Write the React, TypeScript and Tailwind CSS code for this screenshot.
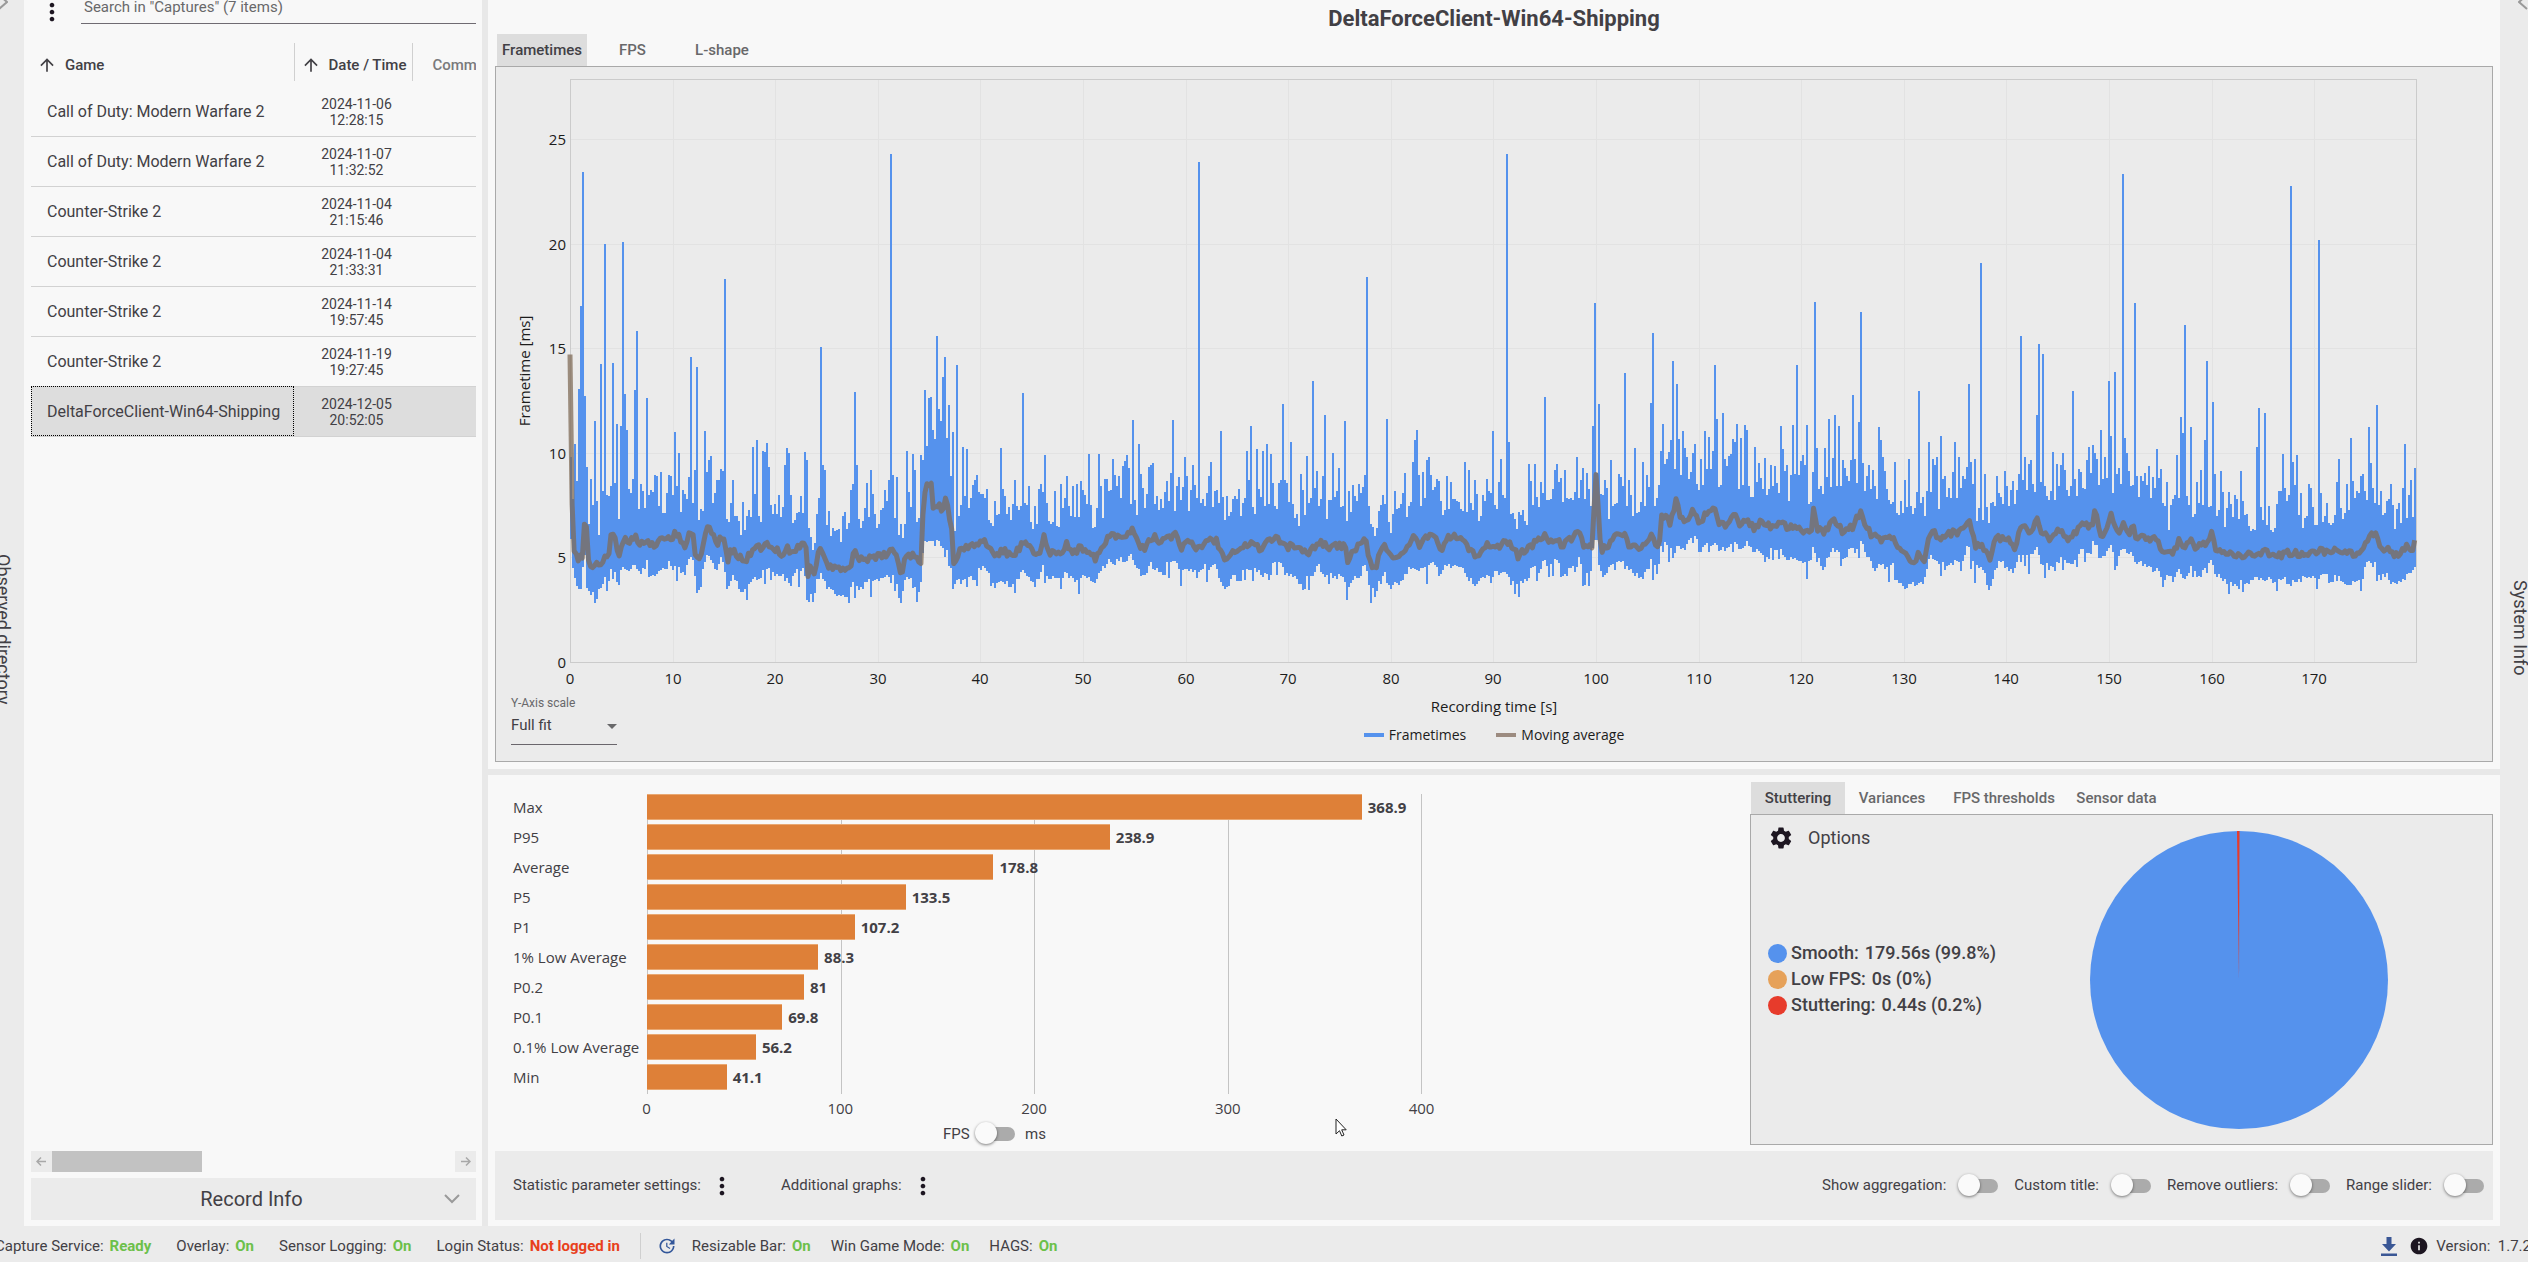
import React from "react";
import {
  MdArrowUpward,
  MdInfo,
  MdMoreVert,
  MdSettings,
  MdUpdate,
} from "react-icons/md";

const captures = [
  { game: "Call of Duty: Modern Warfare 2", date: "2024-11-06", time: "12:28:15" },
  { game: "Call of Duty: Modern Warfare 2", date: "2024-11-07", time: "11:32:52" },
  { game: "Counter-Strike 2", date: "2024-11-04", time: "21:15:46" },
  { game: "Counter-Strike 2", date: "2024-11-04", time: "21:33:31" },
  { game: "Counter-Strike 2", date: "2024-11-14", time: "19:57:45" },
  { game: "Counter-Strike 2", date: "2024-11-19", time: "19:27:45" },
  { game: "DeltaForceClient-Win64-Shipping", date: "2024-12-05", time: "20:52:05" },
];

const metrics = [
  { label: "Max", value: 368.9 },
  { label: "P95", value: 238.9 },
  { label: "Average", value: 178.8 },
  { label: "P5", value: 133.5 },
  { label: "P1", value: 107.2 },
  { label: "1% Low Average", value: 88.3 },
  { label: "P0.2", value: 81 },
  { label: "P0.1", value: 69.8 },
  { label: "0.1% Low Average", value: 56.2 },
  { label: "Min", value: 41.1 },
];

// [seconds, milliseconds] of the single slow frames
const spikes: number[][] = [
  [0, 9.3], [0.4, 10.4], [0.7, 13.05], [1, 17], [1.2, 23.4], [1.35, 12.7], [1.5, 9.3], [2, 8.75], [2.4, 11.5], [2.95, 14.25],
  [3.25, 9.8], [3.4, 20], [4, 14.3], [4.4, 11.4], [4.9, 11.3], [5.1, 20.1], [5.3, 12.8], [5.5, 11.1],
  [6.3, 13], [6.5, 15.8], [7.45, 12.6], [8.3, 8.9], [8.7, 9.1], [9.5, 8.95], [10.2, 11], [10.55, 10],
  [11.6, 14.6], [12, 9.2], [12.25, 14.1], [13, 11.05], [13.2, 9.1], [14.75, 9.15], [14.95, 18.3], [15.7, 8.7],
  [17.7, 10.3], [18.05, 10.6], [18.65, 10.1], [18.85, 10.05], [19.05, 10.45], [19.25, 9.3], [20.8, 9.4],
  [21.1, 10.25], [21.3, 10], [22.75, 10.05], [22.95, 9.65], [24.3, 15.05], [24.5, 9.4], [24.7, 9.2],
  [27.6, 12.9], [27.8, 9.4], [29.3, 9.2], [30.9, 8.7], [31.2, 24.3], [31.4, 8.95], [31.7, 8.85], [32.7, 10.1],
  [33.4, 9.95], [33.6, 9.2], [34.2, 9.9], [34.45, 13], [34.6, 10.7], [34.85, 12.6], [35.1, 12.65], [35.3, 11.1],
  [35.5, 10.5], [35.7, 15.6], [36, 11.5], [36.2, 13.6], [36.4, 14.6], [36.6, 10.7], [36.9, 12.3], [37.15, 11],
  [37.55, 14.2], [38.25, 10.3], [38.6, 10.2], [39.4, 8.7], [42, 10.25], [44.05, 12.85], [46.2, 9.9], [48.4, 8.9],
  [49.4, 8.5], [50.5, 9.95], [51.55, 9.95], [52.85, 9.7], [54.2, 9.9], [54.8, 11.55], [55.4, 10.4], [56.7, 9.5],
  [58.75, 11.55], [59.8, 9.8], [60.6, 9.4], [61.2, 23.9], [62.2, 8.9], [63.3, 11.05], [65.8, 10.1], [66.35, 11.3],
  [66.85, 10.2], [67.35, 10.1], [67.9, 10.4], [68.3, 9.95], [69.4, 12.35], [70.1, 10.5], [71.15, 9], [71.75, 9.85],
  [72.35, 13.45], [72.75, 9.15], [73.4, 11.8], [74.25, 10], [74.85, 9.25], [75.4, 11.5], [76.9, 8.5], [77.65, 18.4],
  [79.55, 11.6], [81.2, 9.05], [82.3, 10.6], [82.5, 11.1], [83.35, 9.65], [83.55, 9.8], [83.9, 8.95], [85.45, 8.9],
  [87.05, 9.55], [87.6, 9.2], [88.2, 8.7], [89.95, 11.05], [90.65, 9.7], [91.2, 24.3], [91.4, 10.5], [93.35, 9.45],
  [95, 12.65], [96.1, 9.45], [98.55, 9.25], [99.6, 11.3], [99.9, 17.15], [100.1, 12.35], [101.45, 9.65],
  [102.7, 13.8], [103.7, 10.25], [104.4, 9.55], [104.95, 8.95], [105.2, 12.4], [105.4, 15.75], [106.35, 11.4],
  [106.8, 9.7], [107.5, 14.4], [107.75, 13.3], [108.3, 11.05], [108.8, 9.8], [109.5, 10.4], [110.45, 11.05],
  [110.9, 10.75], [111.5, 14.2], [111.7, 11.6], [112.25, 11.9], [113.45, 10.5], [113.65, 11.4], [113.95, 10.7],
  [114.45, 11.35], [114.65, 11.1], [115.4, 10.3], [115.8, 9.5], [117.05, 9.4], [118, 11.3], [119.1, 11.35],
  [119.4, 14.2], [120, 9.9], [120.5, 11.35], [121.2, 17.2], [121.4, 10.25], [122.15, 10.25], [122.6, 11.6],
  [123.2, 11.8], [123.6, 11.3], [124.7, 9.65], [124.95, 12.75], [125.2, 9.7], [125.55, 11.45], [125.75, 16.75],
  [125.95, 9.5], [127.4, 11.25], [127.6, 10.6], [127.9, 9.8], [128.15, 9.15], [129.05, 9.55], [130.4, 9.7],
  [131.4, 12.95], [132.4, 10.5], [132.7, 9.7], [133.05, 9.8], [133.45, 10.8], [134.8, 10.5], [135.2, 9.8],
  [136.35, 13.3], [136.85, 9.7], [137.4, 19.05], [137.85, 9], [139.75, 9.15], [141.25, 15.6], [141.65, 9.8],
  [142.35, 9.65], [142.8, 11.8], [143.1, 15.2], [143.45, 14.7], [144.35, 10.05], [145.15, 9.4], [145.45, 10],
  [146.4, 12.95], [147.1, 9.1], [147.95, 10.3], [148.25, 10.35], [148.75, 9.7], [149.2, 11.1], [149.5, 9.8],
  [149.95, 13.45], [150.15, 10.8], [150.4, 13.85], [151.2, 23.35], [151.4, 10.7], [151.75, 10], [152.35, 17.15],
  [153, 8.9], [153.45, 9.05], [154.65, 10.2], [155.6, 8.6], [156.6, 9.9], [156.85, 11.7], [157.15, 10.95],
  [157.4, 16.1], [157.9, 11.25], [159.3, 10.6], [159.55, 14.4], [160, 12.45], [160.3, 9], [160.85, 9.15],
  [162.85, 9.15], [164.4, 10.3], [164.6, 12.15], [165.2, 11.9], [166.95, 9.95], [167.65, 22.75], [167.9, 9.55],
  [168.15, 9.9], [169.4, 8.5], [170.45, 20.15], [172.1, 8.6], [172.4, 9.7], [173.5, 10.7], [174.4, 8.7],
  [175.25, 11.25], [176, 12.3], [177.35, 8.5], [178.75, 10.4], [179.4, 8.7], [179.8, 9.25],
];

const average: number[][] = [
  [0, 14.7], [0.1, 9.5], [0.3, 5.6], [0.5, 5], [0.7, 5.7], [0.8, 5], [1.2, 5], [1.4, 6.5], [1.6, 6.4], [1.7, 4.9], [2.1, 4.6], [2.6, 4.6],
  [3.2, 4.8], [3.5, 5.3], [3.7, 4.8], [4, 6], [4.4, 5.9], [4.8, 4.9], [5.1, 5.9], [5.9, 5.8], [6.4, 6.1], [6.8, 5.6],
  [7.4, 5.6], [7.5, 6.1], [7.7, 5.5], [8.5, 5.7], [8.8, 6], [9.3, 5.8], [9.6, 6.1], [9.9, 5.7], [10.3, 6.2], [10.8, 5.8],
  [11.3, 5.5], [11.7, 6.4], [12.1, 5.8], [12.3, 4.8], [12.8, 5], [13, 5.8], [13.4, 6.4], [13.8, 6.2], [14.3, 5.5],
  [14.7, 6.1], [15, 5.9], [15.4, 4.8], [15.7, 5.4], [16.2, 5.1], [17, 4.8], [17.5, 5.1], [18.2, 5.4], [19.2, 5.6],
  [19.8, 5.3], [20.2, 5.4], [20.7, 5.1], [21.2, 5.5], [21.5, 5.2], [22.4, 5.5], [22.9, 5.9], [23.2, 4.2], [23.5, 4.6],
  [23.8, 4.1], [24.1, 5.1], [24.6, 5.4], [25.1, 4.7], [25.6, 4.5], [26.2, 4.4], [27, 4.35], [27.4, 4.7], [27.7, 5.5],
  [28, 5], [28.8, 4.9], [29.5, 5.1], [30.3, 5], [31, 5.2], [31.5, 5.4], [31.9, 5], [32.3, 4], [32.7, 5.2], [33.2, 5.1],
  [33.9, 5.1], [34.2, 4.6], [34.4, 7], [34.7, 8.4], [35.2, 8.7], [35.3, 7.5], [36, 7.6], [36.2, 7.2], [36.6, 7.8],
  [36.9, 7.2], [37.3, 6.2], [37.4, 4.7], [37.9, 5.2], [38.5, 5.5], [39, 5.6], [39.4, 5.4], [39.8, 5.7], [40.4, 5.8],
  [40.9, 5.4], [41.5, 5.1], [42.2, 5.3], [43, 5.1], [43.8, 5.4], [44.2, 5.7], [44.8, 5.4], [45.4, 5.1], [45.9, 5.4],
  [46.2, 6], [46.5, 5.3], [47.6, 5.1], [48.4, 5.6], [49.1, 5.2], [49.6, 5.4], [50.6, 5.4], [51.2, 5], [51.9, 5.5],
  [52.3, 5.8], [52.8, 6.3], [53.3, 6], [54, 6.1], [54.8, 6.3], [55.4, 5.7], [56, 5.3], [56.7, 6], [57.4, 5.8],
  [58.2, 6], [59.1, 6.1], [59.6, 5.5], [60.3, 5.7], [61.1, 5.4], [61.7, 5.6], [62.2, 5.9], [63, 5.8], [63.4, 5.3],
  [63.8, 5], [64.5, 5.3], [65.5, 5.5], [66.4, 5.7], [67.2, 5.4], [68.3, 5.9], [69.3, 5.8], [69.9, 5.5], [70.5, 5.6],
  [71.4, 5.2], [72.1, 5.3], [73.1, 5.8], [73.8, 5.5], [74.5, 5.6], [75.5, 5.5], [75.8, 4.9], [76.3, 5.3], [77, 5.6],
  [77.6, 5.8], [78, 4.7], [78.6, 4.5], [79, 5.4], [79.5, 5.5], [80.1, 4.9], [80.8, 5.2], [81.8, 5.5], [82.3, 6],
  [82.7, 5.5], [83.4, 5.9], [84.5, 6], [84.9, 5.3], [85.4, 5.9], [86.4, 6], [87.2, 5.7], [87.8, 5.3], [88.3, 5],
  [88.8, 5.4], [89.4, 5.7], [90.2, 5.4], [91.2, 5.8], [91.9, 5.4], [92.4, 5.1], [93.3, 5.4], [94.3, 5.8], [95, 6.1],
  [95.5, 5.7], [96.1, 6], [96.7, 5.5], [97.4, 5.8], [98.4, 6.3], [98.8, 5.6], [99.7, 5.4], [99.9, 8.8], [100.1, 8.8], [100.3, 6],
  [100.6, 5.4], [101.2, 5.6], [101.8, 6], [102.7, 6.1], [103.2, 5.5], [104.5, 5.5], [105.4, 6], [106.1, 5.4], [106.4, 7],
  [107.2, 6.7], [107.9, 7.8], [108.3, 6.8], [108.9, 6.8], [109.5, 7.2], [110.1, 6.7], [110.9, 7.2], [111.6, 7.2],
  [112.1, 6.6], [112.9, 6.5], [113.5, 7.2], [114, 6.6], [114.7, 6.9], [115.3, 6.4], [116, 6.7], [117, 6.5], [118, 6.6],
  [118.6, 6.4], [119.4, 6.4], [120.2, 6.2], [121, 6.4], [121.3, 7.6], [121.5, 6.3], [122.2, 6.2], [123.2, 6.7],
  [124, 6.3], [125, 6.5], [125.8, 7.2], [126.3, 6.4], [127, 6], [128, 5.8], [129, 6], [129.5, 5.4], [130.2, 5.1],
  [130.8, 4.8], [131.4, 5.1], [132, 4.9], [132.6, 6.2], [133.5, 6], [134.5, 6.1], [135.5, 6.3], [136.4, 6.7],
  [137, 5.6], [137.6, 5.7], [138.4, 4.9], [139, 5.9], [140, 6], [140.8, 5.5], [141.4, 6.5], [142.2, 6.2], [143, 6.8],
  [143.5, 6.1], [144.3, 5.9], [145.3, 6.4], [146, 5.9], [146.9, 6.2], [147.4, 6.6], [148.3, 6.4], [148.7, 7.5],
  [149.1, 6.1], [149.6, 6.1], [150.1, 7.1], [150.9, 6.1], [151.3, 6.7], [152, 6.2], [152.3, 6.7], [152.7, 5.8],
  [153.5, 6], [154.5, 5.9], [155.4, 5.3], [156.2, 5.2], [156.8, 5.8], [157.2, 5.4], [157.9, 5.8], [158.4, 5.4],
  [159.2, 5.6], [160, 6.1], [160.5, 5.3], [161.5, 5.3], [163, 5.1], [165, 5.3], [166.2, 5], [167.5, 5.2], [169, 5.2],
  [171, 5.3], [172.5, 5.3], [174, 5.1], [174.8, 5.4], [175.4, 6], [176, 6], [176.6, 5.3], [177.2, 5.4], [178, 5.1],
  [178.8, 5.5], [179.5, 5.4], [179.9, 5.8],
];

const PLOT = { left: 74, right: 1920, top: 12, bottom: 595 };
const toX = (s: number) => PLOT.left + s * 10.26;
const toY = (ms: number) => PLOT.bottom - ms * 20.92;

const createRandom = (seed: number) => () => {
  seed = (seed * 16807) % 2147483647;
  return seed / 2147483647;
};

const averageAt = (s: number) => {
  const i = average.findIndex((p) => p[0] >= s);
  if (i === -1) return average[average.length - 1][1];
  if (i === 0) return average[0][1];
  const [x0, y0] = average[i - 1];
  const [x1, y1] = average[i];
  return y0 + ((y1 - y0) * (s - x0)) / (x1 - x0);
};

const buildFrametimePath = () => {
  const random = createRandom(4711);
  const columns = Math.floor((PLOT.right - PLOT.left) / 2);
  const tops: number[] = [];
  const bottoms: number[] = [];
  let low = 0;
  let swell = 0;
  for (let i = 0; i < columns; i++) {
    const s = i / 5.13 + 0.15;
    const busy = s > 34.3 && s < 37.3;
    const avg = Math.min(averageAt(s), busy ? 7.5 : 7);
    if (i % 3 === 0) {
      low = random() * 0.5;
      swell = random() * 0.9;
    }
    tops.push(avg * 1.12 + 0.35 + swell + Math.pow(random(), 1.6) * 2 + (busy ? 1 : 0));
    const bottom = avg - 0.95 - low - (random() > 0.82 ? random() * 0.9 : random() * 0.2);
    bottoms.push(Math.max(bottom, 2.8) - (busy ? 0.6 : 0));
  }
  spikes.forEach(([s, ms]) => {
    const i = Math.min(Math.round(s * 5.13), columns - 1);
    tops[i] = Math.max(tops[i], ms);
  });
  return tops
    .map((top, i) => {
      const x = PLOT.left + i * 2;
      return `M${x} ${Math.round(toY(top))}h2V${Math.round(toY(bottoms[i]))}h-2z`;
    })
    .join("");
};

const buildAveragePath = () => {
  const random = createRandom(99);
  const points: string[] = [];
  for (let s = 0; s <= 179.9; s += 0.2) {
    const wobble = s < 0.5 ? 0 : (random() - 0.5) * 0.35;
    points.push(`${toX(s).toFixed(1)} ${toY(averageAt(s) + wobble).toFixed(1)}`);
  }
  return "M" + points.join("L");
};

const frametimePath = buildFrametimePath();
const averagePath = buildAveragePath();

const FrametimeChart = () => {
  const xTicks = Array.from({ length: 18 }, (_, i) => i * 10);
  const yTicks = [0, 5, 10, 15, 20, 25];
  return (
    <svg
      viewBox="0 0 1996 621"
      className="block w-full h-[621px] font-['Open_Sans',sans-serif] text-[15px]"
      role="img"
      aria-label="Frametimes"
    >
      <g stroke="#e2e2e2" shapeRendering="crispEdges">
        {xTicks.map((t) => (
          <line key={t} x1={Math.round(toX(t))} x2={Math.round(toX(t))} y1={PLOT.top} y2={PLOT.bottom} />
        ))}
        {yTicks.map((t) => (
          <line key={t} x1={PLOT.left} x2={PLOT.right} y1={Math.round(toY(t))} y2={Math.round(toY(t))} />
        ))}
      </g>
      <rect
        x={PLOT.left}
        y={PLOT.top}
        width={PLOT.right - PLOT.left}
        height={PLOT.bottom - PLOT.top}
        fill="none"
        stroke="#cbcbcb"
        shapeRendering="crispEdges"
      />
      <path d={frametimePath} fill="#5592ed" shapeRendering="crispEdges" />
      <path d={averagePath} fill="none" stroke="#7f6a57" strokeOpacity="0.74" strokeWidth="5" strokeLinejoin="round" />
      <g fill="#1c1c1c">
        {xTicks.map((t) => (
          <text key={t} x={Math.round(toX(t))} y={617} textAnchor="middle">
            {t}
          </text>
        ))}
        {yTicks.map((t) => (
          <text key={t} x={70} y={Math.round(toY(t)) + 6} textAnchor="end">
            {t}
          </text>
        ))}
        <text transform="translate(34 304) rotate(-90)" textAnchor="middle">
          Frametime [ms]
        </text>
      </g>
    </svg>
  );
};

const Switch = ({ id }: { id: string }) => (
  <input
    id={id}
    type="checkbox"
    className="relative appearance-none w-10 h-6 shrink-0 cursor-pointer before:absolute before:left-2 before:top-[5px] before:w-8 before:h-[14px] before:rounded-full before:bg-[#ababab] after:absolute after:left-0 after:top-0 after:w-[22px] after:h-[22px] after:rounded-full after:bg-[#fafafa] after:shadow-[0_1px_3px_rgba(0,0,0,0.5)]"
  />
);

const ToggleOption = ({ id, text }: { id: string; text: string }) => (
  <div className="flex items-center gap-3">
    <label htmlFor={id}>{text}</label>
    <Switch id={id} />
  </div>
);

const Tab = ({ text, active, className }: { text: string; active?: boolean; className: string }) => (
  <button
    role="tab"
    aria-selected={!!active}
    className={`h-8 text-[15px] font-medium whitespace-nowrap ${className} ${
      active ? "bg-[#dddddd] text-[#424045]" : "text-[#68686a]"
    }`}
  >
    {text}
  </button>
);

const CaptureList = () => (
  <aside className="w-[458px] shrink-0 bg-[#f8f8f8] flex flex-col pl-[7px] pr-[6px] pb-[6px] overflow-hidden">
    <div className="flex h-6 items-center shrink-0">
      <button aria-label="Capture options" className="w-[50px] pl-[7px] text-[#1d1621]">
        <MdMoreVert size={28} />
      </button>
      <input
        type="text"
        aria-label="Search captures"
        placeholder={'Search in "Captures" (7 items)'}
        className="flex-1 h-6 pl-[3px] pb-[9px] text-[15px] leading-4 outline-none border-b border-[#6f6b72] placeholder:text-[#68686a]"
      />
    </div>
    <table className="mt-[19px] w-full table-fixed text-left">
      <colgroup>
        <col className="w-[263px]" />
        <col className="w-[118px]" />
        <col />
      </colgroup>
      <thead>
        <tr className="h-[38px] text-[15px]">
          <th className="border-r border-[#d0d0d0] pl-[6px] pt-[6px] font-medium text-[#424045]">
            <span className="flex items-center gap-2">
              <MdArrowUpward size={20} />
              Game
            </span>
          </th>
          <th className="border-r border-[#d0d0d0] pl-[6px] pt-[6px] font-medium text-[#424045] whitespace-nowrap">
            <span className="flex items-center gap-2">
              <MdArrowUpward size={20} />
              Date / Time
            </span>
          </th>
          <th className="pl-5 pt-[6px] font-medium text-[#7a7a7c] overflow-hidden whitespace-nowrap">Comment</th>
        </tr>
        <tr className="h-[5px]" />
      </thead>
      <tbody>
        {captures.map((c) => {
          const selected = c.time === "20:52:05";
          return (
            <tr key={c.time} className={`h-[50px] border-b border-[#d2d2d2] ${selected ? "bg-[#dddddd]" : ""}`}>
              <td
                className={`pl-4 pt-[2px] text-base whitespace-nowrap ${
                  selected ? "outline-1 -outline-offset-1 outline-dotted outline-black" : ""
                }`}
              >
                {c.game}
              </td>
              <td className="pl-[7px] pt-[2px] text-center text-sm leading-4">
                {c.date}
                <br />
                {c.time}
              </td>
              <td />
            </tr>
          );
        })}
      </tbody>
    </table>
    <div className="mt-auto flex h-[21px] shrink-0 text-[#a8a8a8]">
      <button aria-label="Scroll left" className="w-[21px] bg-[#ebebeb] flex items-center justify-center">
        <svg width="11" height="11" viewBox="0 0 11 11" fill="none" stroke="currentColor" strokeWidth="1.5">
          <path d="M10 5.5H1M5 1.5l-4 4 4 4" />
        </svg>
      </button>
      <div className="w-[150px] bg-[#c2c2c2]" />
      <button aria-label="Scroll right" className="ml-auto w-[21px] bg-[#ebebeb] flex items-center justify-center">
        <svg width="11" height="11" viewBox="0 0 11 11" fill="none" stroke="currentColor" strokeWidth="1.5">
          <path d="M1 5.5h9M6 1.5l4 4-4 4" />
        </svg>
      </button>
    </div>
    <button className="mt-[6px] grid h-[42px] shrink-0 grid-cols-[28px_1fr_32px] items-center bg-[#ebebeb] text-xl">
      <span />
      <span>Record Info</span>
      <svg width="16" height="10" viewBox="0 0 16 10" fill="none" stroke="#9a9a9a" strokeWidth="2">
        <path d="M1 1l7 7 7-7" />
      </svg>
    </button>
  </aside>
);

const MetricChart = () => (
  <div className="relative w-[1262px] shrink-0 pt-[19px] pl-[25px] font-['Open_Sans',sans-serif] text-[15px]">
    <div className="relative">
      <div className="absolute inset-y-0 left-[134px] w-[775px] flex">
        {[0, 1, 2, 3].map((i) => (
          <div key={i} className="flex-1 border-l border-[#c4c4c4] last:border-r" />
        ))}
      </div>
      <ul className="relative">
        {metrics.map((m) => (
          <li key={m.label} className="flex h-[30px] pb-1 items-center leading-5">
            <span className="w-[134px] whitespace-nowrap">{m.label}</span>
            <span className="flex w-[775px] h-full items-center">
              <span
                className="h-full shrink-0 border-y border-[#e9a872] bg-[#de8038]"
                style={{ width: `${m.value / 4}%` }}
              />
              <span className="pl-[6px] font-bold">{m.value}</span>
            </span>
          </li>
        ))}
      </ul>
    </div>
    <div className="ml-[95px] flex w-[852px] justify-between pt-[2px] leading-6">
      {[0, 100, 200, 300, 400].map((t) => (
        <span key={t} className="w-[77px] text-center">
          {t}
        </span>
      ))}
    </div>
    <div className="ml-[430px] mt-[2px] flex items-center font-['Roboto',sans-serif]">
      <label htmlFor="unit" className="w-8">FPS</label>
      <Switch id="unit" />
      <label htmlFor="unit" className="pl-[10px]">ms</label>
    </div>
    <svg width="12" height="19" viewBox="0 0 12 19" className="absolute left-[847px] top-[343px]">
      <path
        d="M1 1v15l3.500-3.300 2.300 5.300 2.200-1-2.300-5.200h4.500z"
        fill="#fff"
        stroke="#222"
        strokeWidth="1"
      />
    </svg>
  </div>
);

const stutterLegend = [
  { label: "Smooth:", value: "179.56s (99.8%)", color: "bg-[#5592ed]" },
  { label: "Low FPS:", value: "0s (0%)", color: "bg-[#e6a159]" },
  { label: "Stuttering:", value: "0.44s (0.2%)", color: "bg-[#e73b2b]" },
];

const StutteringPanel = () => (
  <section className="flex-1 flex flex-col pt-[7px]">
    <div role="tablist" className="flex pl-px">
      <Tab text="Stuttering" active className="w-[94px]" />
      <Tab text="Variances" className="w-[94px]" />
      <Tab text="FPS thresholds" className="w-[130px]" />
      <Tab text="Sensor data" className="w-[95px]" />
    </div>
    <div className="flex h-[331px] border border-[#a9a9a9] bg-[#ebebeb]">
      <div className="flex-1 pl-[17px] pt-[9px]">
        <button className="flex items-center gap-[14px] text-lg leading-7">
          <MdSettings size={26} className="text-[#1d1621]" />
          Options
        </button>
        <ul className="mt-[88px] text-lg font-medium leading-[26px]">
          {stutterLegend.map((s) => (
            <li key={s.label} className="flex items-center">
              <span className={`mr-1 w-[19px] h-[19px] rounded-full ${s.color}`} />
              <span className="mr-[6px]">{s.label}</span>
              {s.value}
            </li>
          ))}
        </ul>
      </div>
      <svg viewBox="0 0 300 300" className="mt-[15px] mr-[103px] w-[300px] h-[300px]" role="img" aria-label="Stuttering share">
        <circle cx="150" cy="150" r="149" fill="#5592ed" />
        <path d="M150 150L148 1h2.500z" fill="#e73b2b" />
      </svg>
    </div>
  </section>
);

const StatusItem = ({ label, value, bad }: { label: string; value: string; bad?: boolean }) => (
  <span className="flex gap-[6px] whitespace-nowrap">
    {label}
    <b className={`font-bold ${bad ? "text-[#e8401c]" : "text-[#6cc04a]"}`}>{value}</b>
  </span>
);

const StatusBar = () => (
  <footer className="flex h-9 shrink-0 items-center bg-[#ebebeb] pt-1 text-[15px] overflow-hidden">
    <div className="-ml-[5px] flex gap-[25px]">
      <StatusItem label="Capture Service:" value="Ready" />
      <StatusItem label="Overlay:" value="On" />
      <StatusItem label="Sensor Logging:" value="On" />
      <StatusItem label="Login Status:" value="Not logged in" bad />
    </div>
    <div className="ml-5 mr-4 h-[26px] w-px bg-[#cfcfcf]" />
    <MdUpdate size={20} className="mr-[15px] text-[#33579a]" />
    <div className="flex gap-[20px]">
      <StatusItem label="Resizable Bar:" value="On" />
      <StatusItem label="Win Game Mode:" value="On" />
      <StatusItem label="HAGS:" value="On" />
    </div>
    <div className="ml-auto -mr-[3px] flex items-center">
      <svg width="16" height="19" viewBox="0 0 16 19" fill="#3a5795" className="mr-3">
        <path d="M5.500 0h5v7H15l-7 7.500L1 7h4.500zM0 16.500h16V19H0z" />
      </svg>
      <MdInfo size={20} className="mr-[7px] text-[#1d1621]" />
      <span className="whitespace-nowrap">Version:&nbsp; 1.7.2</span>
    </div>
  </footer>
);

const App = () => {
  return (
    <div className="flex h-screen flex-col overflow-hidden bg-[#f8f8f8] font-['Roboto',sans-serif] text-[#424045]">
      <div className="flex min-h-0 flex-1">
        <button className="relative flex w-6 shrink-0 items-center justify-end bg-[#ebebeb] pt-[32px] pr-[7px] text-lg">
          <svg width="10" height="16" viewBox="0 0 10 16" fill="none" stroke="#9a9a9a" strokeWidth="2" className="absolute -left-[2px] -top-[6px]">
            <path d="M1 1l8 7-8 7" />
          </svg>
          <span className="[writing-mode:vertical-rl] whitespace-nowrap">Observed directory</span>
        </button>
        <CaptureList />
        <div className="w-[6px] shrink-0 bg-[#e8e8e8]" />
        <main className="flex min-w-0 flex-1 flex-col">
          <section className="px-[7px] pb-[7px]">
            <h1 className="h-[34px] pt-1 text-center text-[22px] leading-[30px] font-bold">
              DeltaForceClient-Win64-Shipping
            </h1>
            <div role="tablist" className="flex pl-[2px]">
              <Tab text="Frametimes" active className="w-[90px]" />
              <Tab text="FPS" className="w-[91px]" />
              <Tab text="L-shape" className="w-[88px]" />
            </div>
            <div className="border border-[#a9a9a9] bg-[#ebebeb]">
              <FrametimeChart />
              <div className="grid h-[73px] grid-cols-[1fr_auto_1fr]">
                <div className="ml-[15px] w-[106px] pt-[7px]">
                  <label htmlFor="yscale" className="block text-xs leading-4 text-[#68686a]">
                    Y-Axis scale
                  </label>
                  <div className="relative">
                    <select
                      id="yscale"
                      className="block h-[34px] w-full appearance-none border-b border-[#6a666c] bg-transparent pb-1 text-[15px]"
                    >
                      <option>Full fit</option>
                    </select>
                    <svg width="10" height="5" viewBox="0 0 10 5" className="pointer-events-none absolute right-0 top-[13px]">
                      <path d="M0 0h10L5 5z" fill="#68686a" />
                    </svg>
                  </div>
                </div>
                <div className="text-center font-['Open_Sans',sans-serif] text-[15px] leading-5 text-[#1c1c1c]">
                  <p className="pt-2">Recording time [s]</p>
                  <div className="mt-[9px] flex gap-[30px] text-sm leading-5">
                    <span className="flex items-center gap-[5px]">
                      <i className="h-1 w-5 bg-[#5592ed]" />
                      Frametimes
                    </span>
                    <span className="flex items-center gap-[5px]">
                      <i className="h-1 w-5 bg-[#9c8b80]" />
                      Moving average
                    </span>
                  </div>
                </div>
              </div>
            </div>
          </section>
          <div className="h-[6px] shrink-0 bg-[#e8e8e8]" />
          <div className="flex min-h-0 flex-1 pr-[7px]">
            <MetricChart />
            <StutteringPanel />
          </div>
          <div className="mx-[7px] mb-[6px] flex h-[69px] shrink-0 items-center bg-[#ebebeb] pl-[18px] pr-[9px] text-[15px]">
            <span>Statistic parameter settings:</span>
            <button aria-label="Statistic parameter settings" className="ml-[7px] mr-[45px] text-[#1d1621]">
              <MdMoreVert size={28} />
            </button>
            <span>Additional graphs:</span>
            <button aria-label="Additional graphs" className="ml-[7px] text-[#1d1621]">
              <MdMoreVert size={28} />
            </button>
            <div className="ml-auto flex gap-4">
              <ToggleOption id="aggregation" text="Show aggregation:" />
              <ToggleOption id="title" text="Custom title:" />
              <ToggleOption id="outliers" text="Remove outliers:" />
              <ToggleOption id="range" text="Range slider:" />
            </div>
          </div>
        </main>
        <button className="relative flex w-7 shrink-0 items-center overflow-hidden bg-[#ebebeb] pt-[30px] pl-[6px] text-lg">
          <svg width="10" height="16" viewBox="0 0 10 16" fill="none" stroke="#9a9a9a" strokeWidth="2" className="absolute right-0 -top-[6px]">
            <path d="M9 1L1 8l8 7" />
          </svg>
          <span className="[writing-mode:vertical-rl] whitespace-nowrap">System Info</span>
        </button>
      </div>
      <StatusBar />
    </div>
  );
};

export default App;
